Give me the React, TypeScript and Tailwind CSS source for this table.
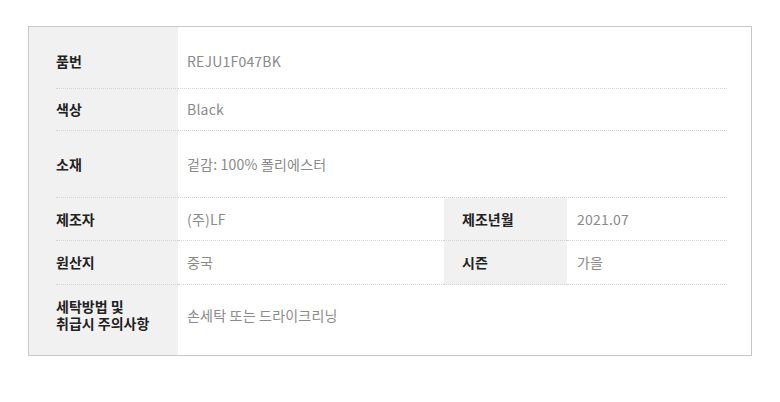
const font = { fontFamily: '"Noto Sans CJK KR", "Noto Sans", sans-serif' };

type Cell = { label: string; value: string };

const Label: React.FC<{ text: string; first?: boolean; dotted: boolean; pt: string; pb: string }> = ({ text, first, dotted, pt, pb }) => (
    <div className={`${first ? 'w-[149px] pl-[27px]' : 'w-[123px]'} ${pt} ${pb} flex bg-[#f1f1f1] shrink-0`}>
        <div className={`flex-1 flex items-center text-[14px] leading-[17px] font-bold text-[#222] whitespace-pre-line ${first ? '' : 'pl-[18px]'} ${dotted ? 'border-b border-dotted border-[#d2d2d2]' : ''}`}>
            {text}
        </div>
    </div>
);

const Value: React.FC<{ text: string; last?: boolean; className: string; dotted: boolean; pt: string; pb: string; pl: string }> = ({ text, last, className, dotted, pt, pb, pl }) => (
    <div className={`${className} ${pt} ${pb} ${last ? 'pr-[24px]' : ''} flex`}>
        <div className={`flex-1 flex items-center ${pl} text-[14px] tracking-[0.2px] text-[#8a8a8a] ${dotted ? 'border-b border-dotted border-[#d2d2d2]' : ''}`}>
            {text}
        </div>
    </div>
);

const rows: { h: string; pt: string; pb: string; cells: Cell[] }[] = [
    { h: 'h-[62px]', pt: 'pt-[8px]', pb: '', cells: [{ label: '품번', value: 'REJU1F047BK' }] },
    { h: 'h-[42px]', pt: '', pb: '', cells: [{ label: '색상', value: 'Black' }] },
    { h: 'h-[67px]', pt: '', pb: '', cells: [{ label: '소재', value: '겉감: 100% 폴리에스터' }] },
    { h: 'h-[43px]', pt: '', pb: '', cells: [{ label: '제조자', value: '(주)LF' }, { label: '제조년월', value: '2021.07' }] },
    { h: 'h-[44px]', pt: '', pb: '', cells: [{ label: '원산지', value: '중국' }, { label: '시즌', value: '가을' }] },
    { h: 'h-[70px]', pt: '', pb: 'pb-[10px]', cells: [{ label: '세탁방법 및\n취급시 주의사항', value: '손세탁 또는 드라이크리닝' }] },
];

export default function App() {
    return (
        <div className="w-[780px] h-[402px] bg-white pt-[26px] pl-[28px]" style={font}>
            <div className="w-[724px] border border-[#c9c9c9] flex flex-col">
                {rows.map((row, i) => {
                    const dotted = i < rows.length - 1;
                    return (
                        <div key={i} className={`flex ${row.h}`}>
                            <Label text={row.cells[0].label} first dotted={dotted} pt={row.pt} pb={row.pb} />
                            {row.cells.length === 1 ? (
                                <Value text={row.cells[0].value} last className="flex-1" dotted={dotted} pt={row.pt} pb={row.pb} pl="pl-[9px]" />
                            ) : (
                                <>
                                    <Value text={row.cells[0].value} className="w-[266px]" dotted={dotted} pt={row.pt} pb={row.pb} pl="pl-[9px]" />
                                    <Label text={row.cells[1].label} dotted={dotted} pt={row.pt} pb={row.pb} />
                                    <Value text={row.cells[1].value} last className="flex-1" dotted={dotted} pt={row.pt} pb={row.pb} pl="pl-[10px]" />
                                </>
                            )}
                        </div>
                    );
                })}
            </div>
        </div>
    );
}
